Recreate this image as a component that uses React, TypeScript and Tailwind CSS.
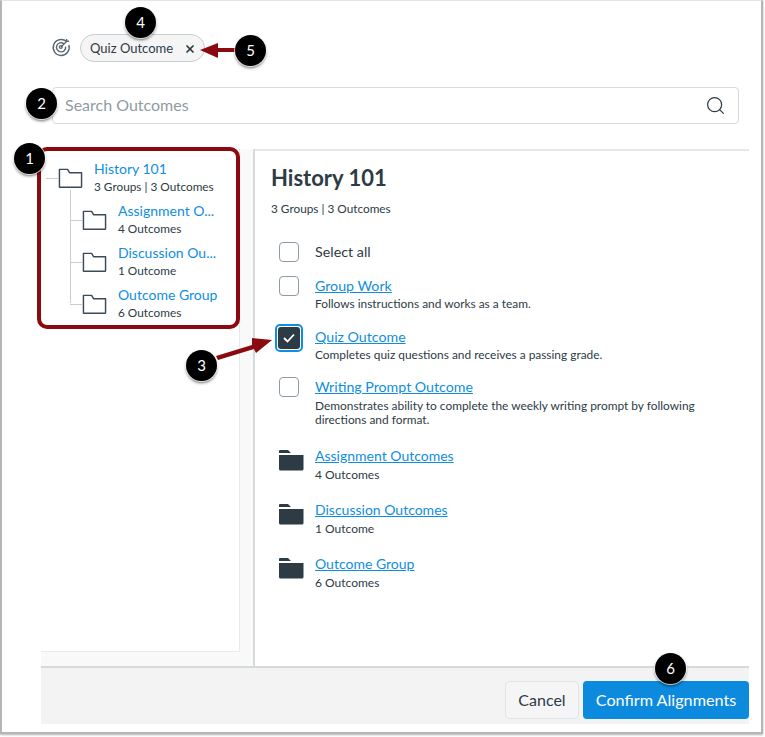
import { Search, X } from 'lucide-react';

const font = { fontFamily: 'Lato, "Open Sans", sans-serif' };

const Badge = ({ n, className }: { n: number; className: string }) => (
  <div
    className={`absolute flex h-[31px] w-[31px] items-center justify-center rounded-full bg-black text-[15px] text-white shadow-[0_2px_3px_rgba(0,0,0,0.55)] ring-1 ring-white/70 ${className}`}
  >
    {n}
  </div>
);

const OutlineFolder = () => (
  <svg width="25" height="22" viewBox="0 0 26 22" fill="none" stroke="#3b4a58" strokeWidth="1.5" className="shrink-0">
    <path d="M1.5 20.5 V2 H10 L12 5.5 H24.5 V20 a.7.7 0 0 1 -.7 .7 H2 Z" strokeLinejoin="round" />
  </svg>
);

const SolidFolder = () => (
  <svg width="25" height="22" viewBox="0 0 25 22" className="shrink-0">
    <path d="M0 2 a1 1 0 0 1 1-1 H9 L12 4 H0 Z M0 6 H24.5 V20 a1.5 1.5 0 0 1 -1.5 1.5 H1.5 A1.5 1.5 0 0 1 0 20 Z" fill="#2d3b45" />
  </svg>
);

const TreeRow = ({ title, sub }: { title: string; sub: string }) => (
  <div className="flex h-[42px] items-center">
    <div className="h-px w-[12px] shrink-0 bg-[#c7cdd1]" />
    <OutlineFolder />
    <div className="-mt-[2px] ml-[11px] whitespace-nowrap">
      <div className="text-[14px] leading-[18px] text-[#0f8ee0]">{title}</div>
      <div className="text-[11.8px] leading-[17px] text-[#2d3b45]">{sub}</div>
    </div>
  </div>
);

const Check = ({ checked }: { checked?: boolean }) =>
  checked ? (
    <div className="flex h-[28px] w-[28px] items-center justify-center rounded-[5px] border-2 border-[#0f8ee0] bg-white">
      <div className="flex h-[22px] w-[22px] items-center justify-center rounded-[3px] bg-[#2d3b45]">
        <svg width="12" height="10" viewBox="0 0 12 10" fill="none" stroke="white" strokeWidth="1.8">
          <path d="M1 5 L4.5 8.5 L11 1.5" />
        </svg>
      </div>
    </div>
  ) : (
    <div className="ml-[2px] h-[20px] w-[20px] rounded-[4px] border border-[#8f9ba3] bg-white" />
  );

const OutcomeRow = ({
  title,
  desc,
  checked,
  className,
  descClass = 'mt-[2px]',
}: {
  title: string;
  desc: string;
  checked?: boolean;
  className: string;
  descClass?: string;
}) => (
  <div className={`flex ${className}`}>
    <div className="flex w-[44px] shrink-0 justify-start pl-[6px]">
      <div className={checked ? '-ml-[2px] -mt-[4px]' : '-mt-[1px]'}>
        <Check checked={checked} />
      </div>
    </div>
    <div className="pr-[40px]">
      <div className="text-[14.2px] leading-[18px] text-[#0f8ee0] underline">{title}</div>
      <div className={`${descClass} text-[11.9px] leading-[14px] text-[#2d3b45]`}>{desc}</div>
    </div>
  </div>
);

const GroupRow = ({ title, sub, className }: { title: string; sub: string; className: string }) => (
  <div className={`flex ${className}`}>
    <div className="w-[44px] shrink-0 pl-[8px] pt-[2px]">
      <SolidFolder />
    </div>
    <div>
      <div className="text-[14px] leading-[18px] text-[#0f8ee0] underline">{title}</div>
      <div className="mt-[1px] text-[12px] leading-[18px] text-[#2d3b45]">{sub}</div>
    </div>
  </div>
);

export default function App() {
  return (
    <div className="relative h-[737px] w-[765px] overflow-hidden bg-white" style={font}>
      <div className="flex h-[734px] w-[763px] flex-col border-b-2 border-l-2 border-r-2 border-t border-[#b5b5b5] border-t-[#e4e4e4] bg-white pl-[39px] pr-[12px] shadow-[0_1px_2px_rgba(0,0,0,0.3)]">
        <div className="flex h-[86px] shrink-0 items-start pl-[10px] pt-[33px]">
          <svg width="20" height="20" viewBox="0 0 20 20" fill="none" stroke="#5b6770" strokeWidth="1.4" className="mt-[3px]">
            <path d="M15.5 4.5 A8 8 0 1 0 17.8 8" />
            <path d="M12.8 6.6 A4.6 4.6 0 1 0 14.6 9.5" />
            <circle cx="9.8" cy="10" r="1.4" />
            <path d="M10 10 L16 4 M15.6 2 V4.2 H18" />
          </svg>
          <div className="ml-[9px] flex h-[28px] w-[125px] items-center justify-between rounded-full border border-[#c7cdd1] bg-[#f5f5f5] pl-[9px] pr-[8px] text-[13px] text-[#2d3b45]">
            <span className="mt-[2px]">Quiz Outcome</span>
            <X size={12} strokeWidth={3.5} color="#2d3b45" className="mt-[2px]" />
          </div>
        </div>

        <div className="ml-[11px] mr-[10px] flex h-[37px] shrink-0 items-center justify-between rounded-[4px] border border-[#d5dadd] bg-white pl-[12px] pr-[12px]">
          <span className="-mt-[1px] text-[16px] text-[#8f9ba3]">Search Outcomes</span>
          <Search size={21} strokeWidth={1.4} color="#2d3b45" />
        </div>

        <div className="mt-[25px] flex min-h-0 flex-1">
          <div className="flex w-[214px] shrink-0 flex-col border-r-2 border-[#d5dadd] bg-[#f9f9f9]">
            <div className="h-[503px] w-[199px] border-b border-r border-[#e8eaec] bg-white pl-[5px] pt-[8px]">
              <div className="relative w-[190px]">
                <div className="absolute bottom-[22px] left-[24px] top-[33px] w-px bg-[#c7cdd1]" />
                <TreeRow title="History 101" sub="3 Groups | 3 Outcomes" />
                <div className="pl-[24px]">
                  <TreeRow title="Assignment O..." sub="4 Outcomes" />
                  <TreeRow title="Discussion Ou..." sub="1 Outcome" />
                  <TreeRow title="Outcome Group" sub="6 Outcomes" />
                </div>
              </div>
            </div>
          </div>
          <div className="min-w-0 flex-1 border-t-2 border-[#e4e7e9] pl-[16px] pt-[14px] text-[#2d3b45]">
            <h1 className="text-[22px] font-bold leading-[26px]">History 101</h1>
            <div className="mt-[10px] text-[11.8px] leading-[16px]">3 Groups | 3 Outcomes</div>
            <div className="mt-[24px] flex h-[22px] items-center">
              <div className="w-[44px] pl-[6px]">
                <Check />
              </div>
              <span className="text-[14.3px]">Select all</span>
            </div>
            <OutcomeRow className="mt-[14px]" title="Group Work" desc="Follows instructions and works as a team." />
            <OutcomeRow className="mt-[17px]" title="Quiz Outcome" desc="Completes quiz questions and receives a passing grade." checked />
            <OutcomeRow
              className="mt-[16px]"
              descClass="mt-[3px]"
              title="Writing Prompt Outcome"
              desc="Demonstrates ability to complete the weekly writing prompt by following directions and format."
            />
            <GroupRow className="mt-[20px]" title="Assignment Outcomes" sub="4 Outcomes" />
            <GroupRow className="mt-[17px]" title="Discussion Outcomes" sub="1 Outcome" />
            <GroupRow className="mt-[17px]" title="Outcome Group" sub="6 Outcomes" />
          </div>
        </div>

        <div className="mb-[8px] flex h-[58px] shrink-0 items-start justify-end gap-[4px] border-t-2 border-[#d5dadd] bg-[#f3f3f3] pt-[13px]">
          <div className="flex h-[38px] w-[74px] items-center justify-center rounded-[4px] border border-[#e0e3e5] bg-[#f5f5f5] text-[16px] text-[#2d3b45]">
            Cancel
          </div>
          <div className="flex h-[38px] w-[166px] items-center justify-center rounded-[4px] bg-[#0c8ade] text-[16.2px] text-white">
            Confirm Alignments
          </div>
        </div>
      </div>

      {/* annotations */}
      <div className="absolute left-[37px] top-[147px] h-[182px] w-[203px] rounded-[10px] border-4 border-[#8b0a0f]" />
      <svg width="765" height="737" className="pointer-events-none absolute left-0 top-0">
        <path d="M200 50 L218 43 V48 H238 V52 H218 V58 Z" fill="#8b0a0f" />
        <path d="M216 356 L252 345 L252 338 L272 340 L256 353 L254 349 L218 360 Z" fill="#8b0a0f" />
      </svg>
      <Badge n={1} className="left-[14px] top-[143px]" />
      <Badge n={2} className="left-[26px] top-[88px]" />
      <Badge n={3} className="left-[186px] top-[350px]" />
      <Badge n={4} className="left-[125px] top-[7px]" />
      <Badge n={5} className="left-[235px] top-[35px]" />
      <Badge n={6} className="left-[655px] top-[653px]" />
    </div>
  );
}
